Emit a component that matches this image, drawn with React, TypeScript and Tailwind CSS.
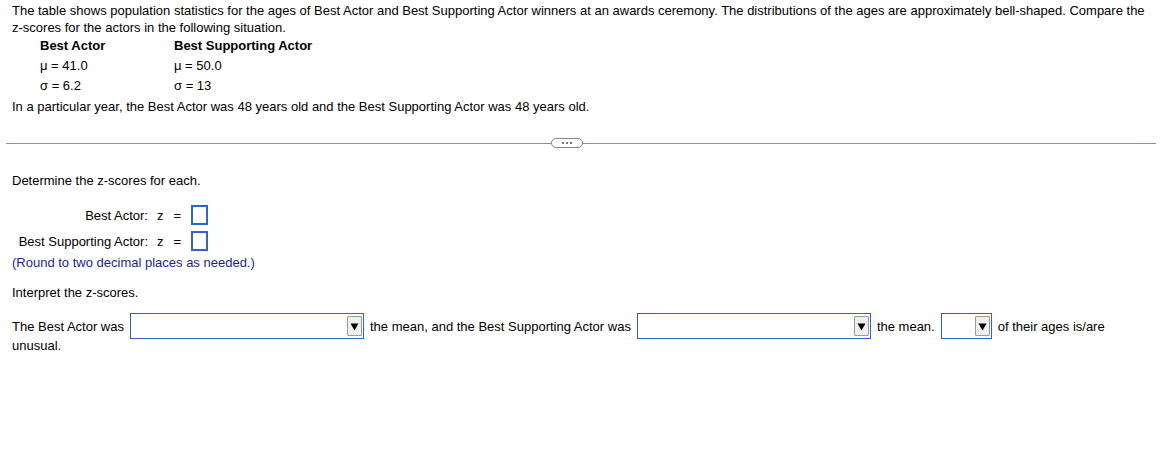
import React from 'react'

const FONT = { fontFamily: '"Liberation Sans", Arial, sans-serif' }

function Dropdown({ width }: { width: string }) {
  return (
    <span className={`inline-flex h-[26px] ${width} items-center justify-end border border-[#2f62d6] bg-white pr-[1px] align-middle`}>
      <span className="flex h-[20px] w-[15px] items-center justify-center rounded-[1px] border border-[#9a9a9a] bg-[#efefef]">
        <svg width="9" height="9" viewBox="0 0 9 9">
          <path d="M0.5 1.5 H8.5 L4.5 8.5 Z" fill="#000" />
        </svg>
      </span>
    </span>
  )
}

function AnswerBox() {
  return <span className="inline-block h-[20px] w-[17px] border-2 border-[#3062d4] bg-white align-middle" />
}

export default function App() {
  return (
    <div className="h-[462px] w-[1166px] bg-white text-[13px] leading-[17px] text-black" style={FONT}>
      <div className="px-3 pt-[2px]">
        <p>
          The table shows population statistics for the ages of Best Actor and Best Supporting Actor winners at an awards ceremony. The distributions of the ages are approximately bell-shaped. Compare the z-scores for the actors in the following situation.
        </p>
        <div className="grid grid-cols-[134px_200px] pl-7">
          <div className="h-[20px] font-bold leading-[20px]">Best Actor</div>
          <div className="h-[20px] font-bold leading-[20px]">Best Supporting Actor</div>
          <div className="h-[20px] leading-[20px]">μ = 41.0</div>
          <div className="h-[20px] leading-[20px]">μ = 50.0</div>
          <div className="h-[20px] leading-[20px]">σ = 6.2</div>
          <div className="h-[20px] leading-[20px]">σ = 13</div>
        </div>
        <p className="mt-[1px] leading-[20px]">In a particular year, the Best Actor was 48 years old and the Best Supporting Actor was 48 years old.</p>
      </div>

      <div className="mt-[21px] flex items-center pl-[6px] pr-[10px]">
        <div className="h-px w-[545px] bg-[#8a9199]" />
        <div className="flex h-[10px] w-[32px] items-center justify-center gap-[2px] rounded-full border border-[#7d8590] bg-white">
          <span className="h-[2px] w-[2px] rounded-full bg-[#444]" />
          <span className="h-[2px] w-[2px] rounded-full bg-[#444]" />
          <span className="h-[2px] w-[2px] rounded-full bg-[#444]" />
        </div>
        <div className="h-px flex-1 bg-[#8a9199]" />
      </div>

      <div className="px-3">
        <p className="mt-[24px]">Determine the z-scores for each.</p>

        <div className="mt-[16px] grid grid-cols-[136px_auto_auto_auto] items-center justify-start gap-y-[6px]">
          <div className="text-right">Best Actor:</div>
          <div className="pl-[9px]">z</div>
          <div className="pl-[10px] pr-[10px]">=</div>
          <AnswerBox />
          <div className="text-right">Best Supporting Actor:</div>
          <div className="pl-[9px]">z</div>
          <div className="pl-[10px] pr-[10px]">=</div>
          <AnswerBox />
        </div>

        <p className="mt-[3px] text-[#1c1ca3]">(Round to two decimal places as needed.)</p>

        <p className="mt-[13px]">Interpret the z-scores.</p>

        <div className="mt-[12px] flex items-center">
          <span>The Best Actor was</span>
          <span className="ml-[6px]"><Dropdown width="w-[234px]" /></span>
          <span className="ml-[6px]">the mean, and the Best Supporting Actor was</span>
          <span className="ml-[6px]"><Dropdown width="w-[234px]" /></span>
          <span className="ml-[6px]">the mean.</span>
          <span className="ml-[6px]"><Dropdown width="w-[51px]" /></span>
          <span className="ml-[6px]">of their ages is/are</span>
        </div>
        <p className="-mt-[2px]">unusual.</p>
      </div>
    </div>
  )
}
